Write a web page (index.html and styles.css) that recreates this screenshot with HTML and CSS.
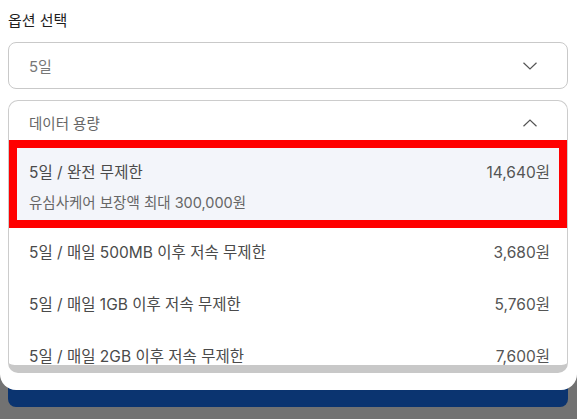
FILE: index.html
```html
<!DOCTYPE html>
<html lang="ko">
    <head>
        <meta charset="utf-8">
        <title>옵션 선택</title>
        <link rel="stylesheet" href="styles.css">
    </head>
    <body>
        <div class="sheet">
            <p class="sheetTitle">옵션 선택</p>

            <div class="select">
                <span class="selectValue">5일</span>
                <svg class="chevron" width="14" height="8" viewBox="0 0 14 8">
                    <path d="M0.5 0.8 L7 7 L13.5 0.8" fill="none" stroke="#555" stroke-width="1.2"/>
                </svg>
            </div>

            <div class="dropdown">
                <div class="dropdownHead">
                    <span>데이터 용량</span>
                    <svg class="chevron" width="14" height="8" viewBox="0 0 14 8">
                        <path d="M0.5 7.2 L7 1 L13.5 7.2" fill="none" stroke="#555" stroke-width="1.2"/>
                    </svg>
                </div>
                <ul class="optionList">
                    <li class="option selected">
                        <div class="optionRow">
                            <span>5일 / 완전 무제한</span>
                            <span class="price">14,640원</span>
                        </div>
                        <div class="optionNote">유심사케어 보장액 최대 300,000원</div>
                    </li>
                    <li class="option">
                        <div class="optionRow">
                            <span>5일 / 매일 500MB 이후 저속 무제한</span>
                            <span class="price">3,680원</span>
                        </div>
                    </li>
                    <li class="option">
                        <div class="optionRow">
                            <span>5일 / 매일 1GB 이후 저속 무제한</span>
                            <span class="price">5,760원</span>
                        </div>
                    </li>
                    <li class="option">
                        <div class="optionRow">
                            <span>5일 / 매일 2GB 이후 저속 무제한</span>
                            <span class="price">7,600원</span>
                        </div>
                    </li>
                </ul>
            </div>
        </div>
        <!-- buy button sits under the sheet, only its bottom edge shows -->
        <button class="buyBtn" aria-label="구매하기"></button>
    </body>
</html>
```

FILE: styles.css
```css
body{
    margin: 0;
    background-color: #727272;
    font-family: Inter, "Noto Sans CJK KR", sans-serif;
    color: #4a4a4a;
}

.sheet{
    position: relative;
    z-index: 2;
    height: 390px;
    box-sizing: border-box;
    padding: 10px 9px 0 8px;
    background-color: #ffffff;
    border-radius: 0 0 16px 16px;
}

.sheetTitle{
    margin: 0 0 10px 0;
    font-size: 15px;
    line-height: 22px;
    color: #1e1e1e;
}

.select{
    height: 47px;
    box-sizing: border-box;
    display: flex;
    align-items: center;
    justify-content: space-between;
    padding: 0 30px 0 20px;
    border: 1px solid #c9c9c9;
    border-radius: 8px;
}
.selectValue{
    font-size: 15px;
    color: #777777;
}

.dropdown{
    margin-top: 11px;
    height: 273px;
    box-sizing: border-box;
    border: 1px solid #cccccc;
    border-bottom: 8px solid #c8c8c8;
    border-radius: 10px;
    overflow: hidden;
}
.dropdownHead{
    height: 39px;
    box-sizing: border-box;
    display: flex;
    align-items: center;
    justify-content: space-between;
    padding: 4px 30px 0 20px;
    font-size: 14.5px;
    color: #666666;
}

.optionList{
    list-style: none;
    margin: 0;
    padding: 0;
}
.option{
    padding: 15px 17px 17px 20px;
    font-size: 15.5px;
    line-height: 20px;
}
.optionRow{
    display: flex;
    justify-content: space-between;
}
.option.selected{
    padding: 15px 9px 7px 12px;
    background-color: #f3f5fa;
    border: 8px solid #ff0000;
}
.optionNote{
    margin-top: 10px;
    font-size: 14.5px;
    color: #666666;
}
.price{
    color: #555555;
}

.buyBtn{
    display: block;
    width: 560px;
    height: 47px;
    margin: -30px 0 0 8px;
    border: 0;
    border-radius: 8px;
    background-color: #0b3470;
}
```
